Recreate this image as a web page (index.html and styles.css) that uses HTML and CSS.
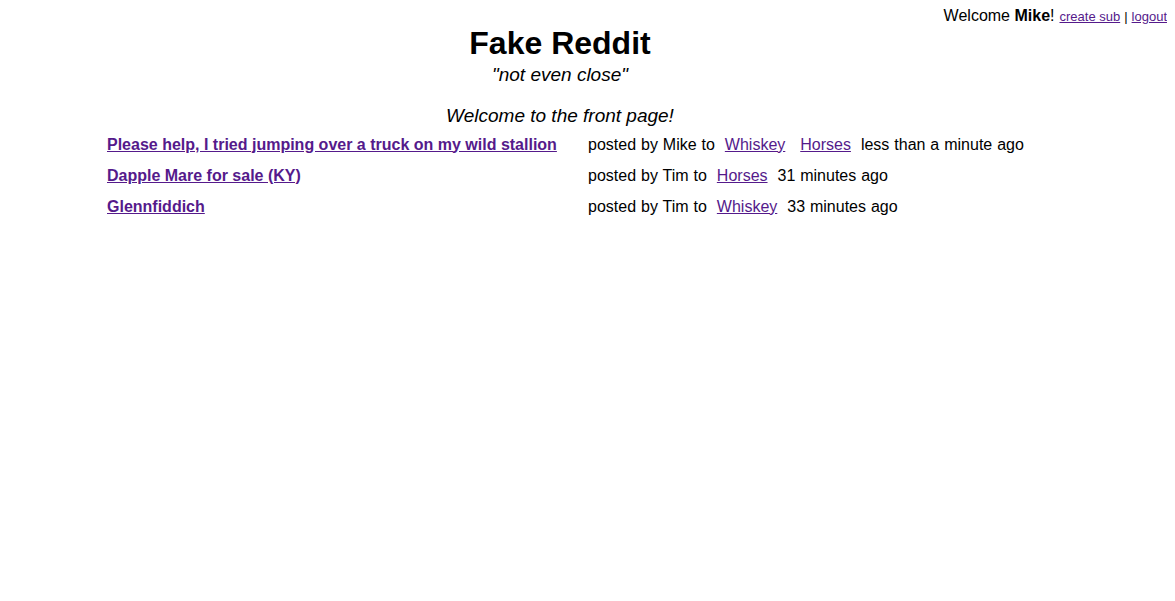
FILE: index.html
```html
<!DOCTYPE html>
<html>
<head>
<meta charset="utf-8">
<link rel="stylesheet" href="styles.css">
</head>
<body>
<div class="topbar">
  <span class="welcome">Welcome <b>Mike</b>!</span>
  <a class="small-link" href="#">create sub</a>
  <span class="pipe">|</span>
  <a class="small-link" href="#">logout</a>
</div>
<main class="page">
  <h1 class="title">Fake Reddit</h1>
  <p class="tagline">"not even close"</p>
  <p class="front">Welcome to the front page!</p>
  <table class="posts">
    <tr>
      <td class="post-title"><a href="#">Please help, I tried jumping over a truck on my wild stallion</a></td>
      <td class="post-meta">posted by Mike to <a href="#" class="sub">Whiskey</a> <a href="#" class="sub">Horses</a> less than a minute ago</td>
    </tr>
    <tr>
      <td class="post-title"><a href="#">Dapple Mare for sale (KY)</a></td>
      <td class="post-meta">posted by Tim to <a href="#" class="sub">Horses</a> 31 minutes ago</td>
    </tr>
    <tr>
      <td class="post-title"><a href="#">Glennfiddich</a></td>
      <td class="post-meta">posted by Tim to <a href="#" class="sub">Whiskey</a> 33 minutes ago</td>
    </tr>
  </table>
</main>
</body>
</html>
```
FILE: styles.css
```css
body {
  margin: 8px;
  font-family: "Liberation Sans", Arial, sans-serif;
  font-size: 16px;
  color: #000;
  background: #fff;
}
a { color: #551a8b; }
.topbar {
  display: flex;
  justify-content: flex-end;
  align-items: baseline;
  gap: 4px;
  margin-top: -1px;
}
.welcome { margin-right: 1px; }
.small-link, .pipe { font-size: 13px; }
.page {
  width: 922px;
  margin-left: 91px;
  text-align: center;
}
.title {
  font-size: 32px;
  font-weight: bold;
  margin: 0;
  line-height: 37px;
}
.tagline {
  font-style: italic;
  font-size: 19px;
  margin: 2px 0 0;
}
.front {
  font-style: italic;
  font-size: 19px;
  margin: 19px 0 0;
}
.posts {
  width: max-content;
  text-align: left;
  border-collapse: collapse;
  margin-top: 2px;
}
.posts td {
  padding: 0;
  height: 31px;
  vertical-align: middle;
  white-space: nowrap;
}
.post-title {
  padding-left: 8px !important;
  width: 481px;
  font-weight: bold;
}
.post-meta { word-spacing: 0.5px; }
.sub { margin: 0 5px; }
```
